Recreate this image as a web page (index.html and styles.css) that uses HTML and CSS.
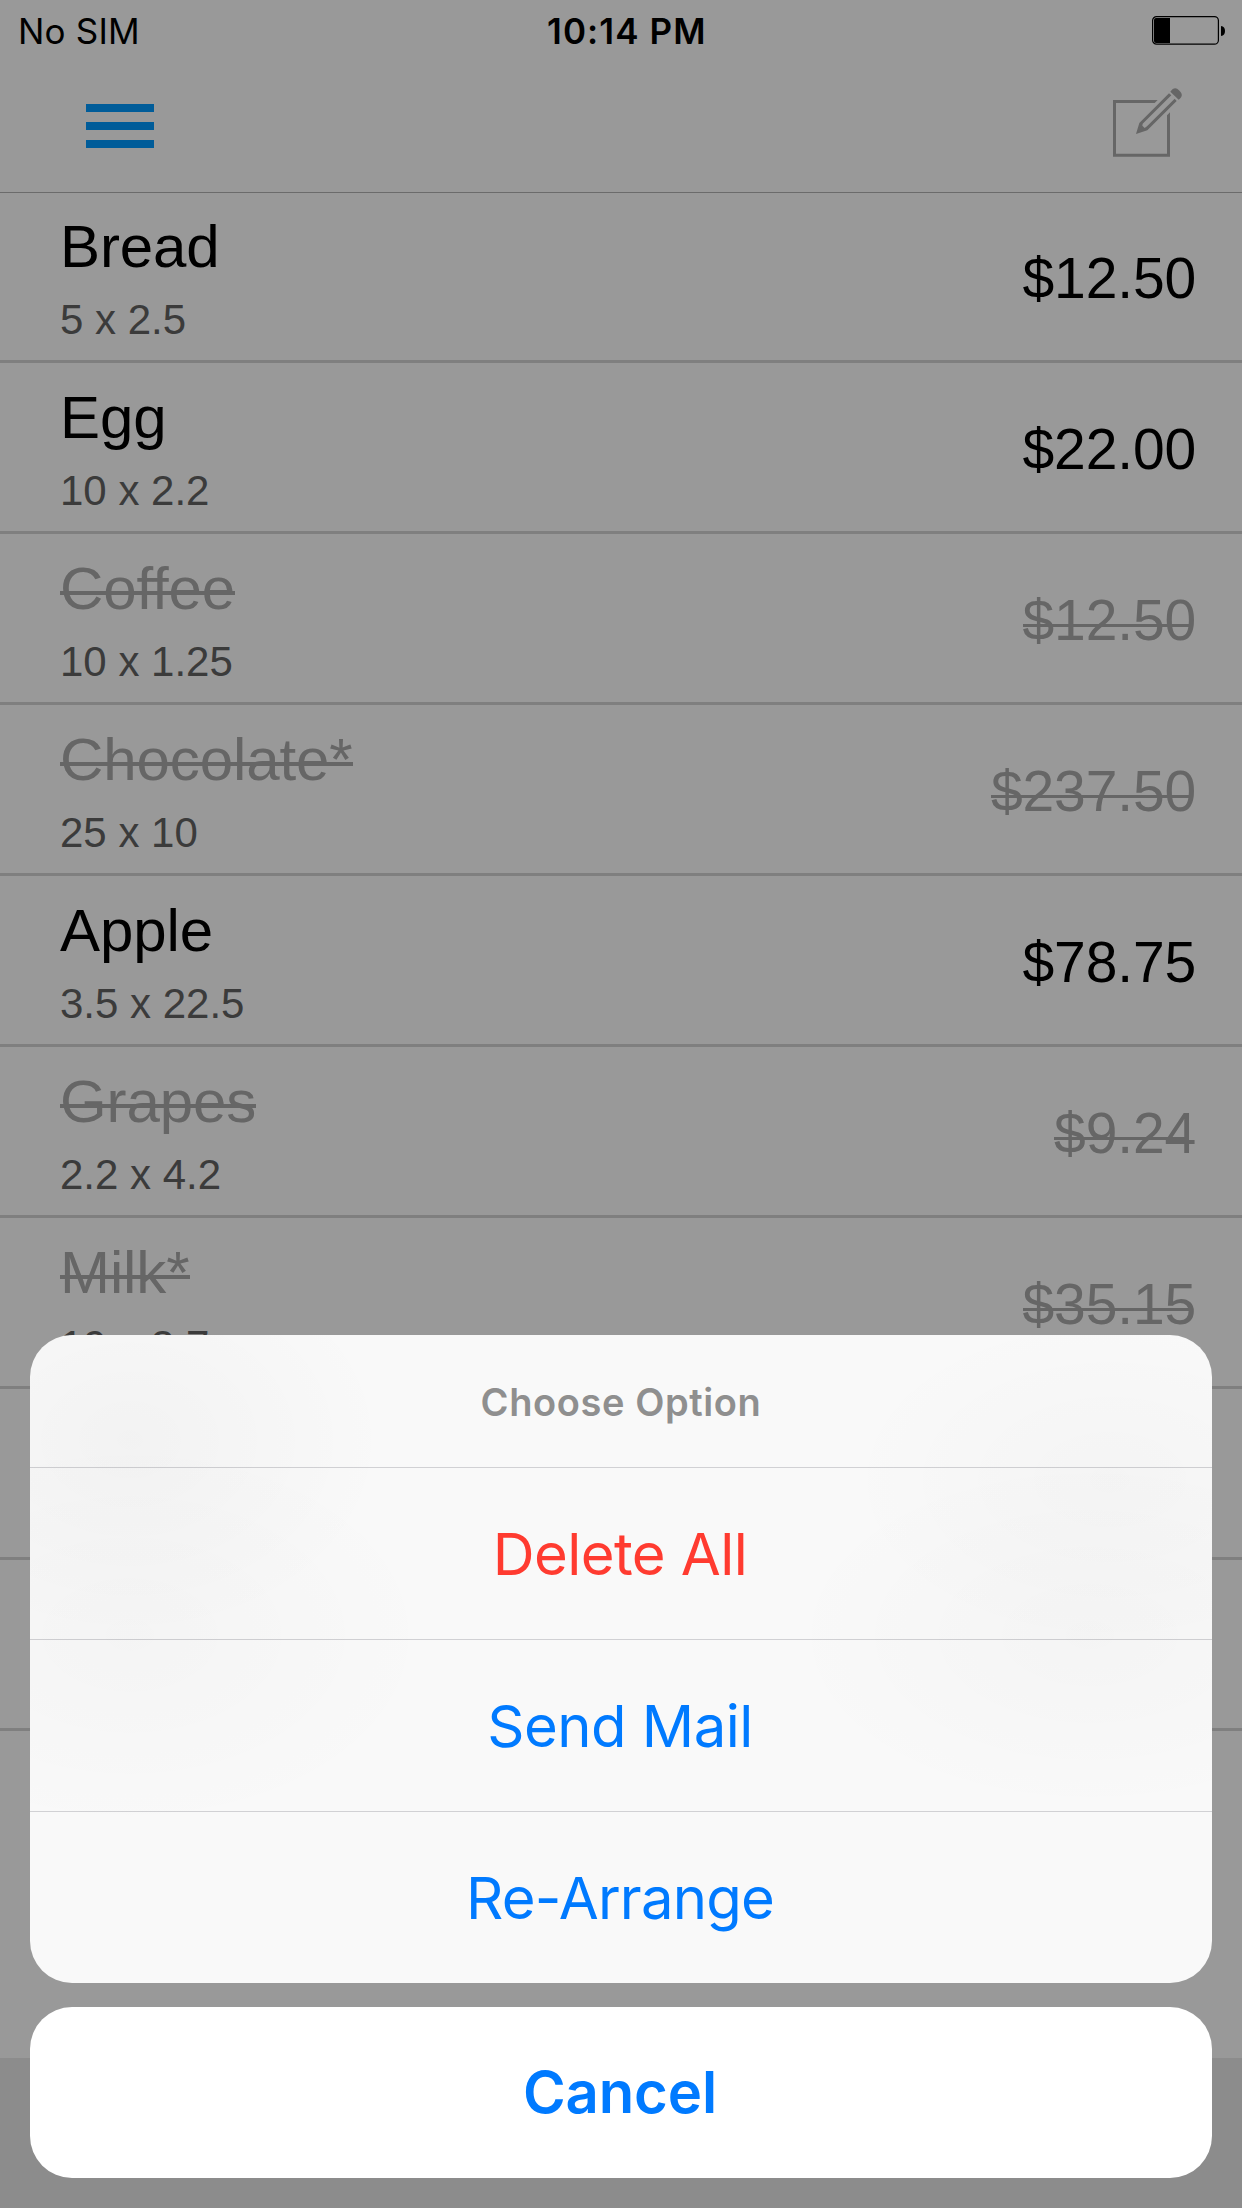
FILE: index.html
```html
<!DOCTYPE html>
<html lang="en">
<head>
    <meta charset="UTF-8">
    <meta name="viewport" content="width=device-width, initial-scale=1.0">
    <title>Shopping List</title>
    <link rel="stylesheet" href="styles.css">
</head>
<body>
    <div class="screen">
        <div class="status-bar">
            <span class="carrier">No SIM</span>
            <span class="clock">10:14 PM</span>
            <svg class="battery" width="73" height="29" viewBox="0 0 73 29">
                <rect x="0.6" y="0.6" width="65.8" height="27.6" rx="4" fill="none" stroke="#000" stroke-width="1.2"/>
                <path d="M18 2H4Q2 2 2 4V25Q2 27 4 27H18Z"/>
                <path d="M69 10Q73 10.500 73 15T69 20Z"/>
            </svg>
        </div>
        <div class="nav-bar">
            <button class="menu-button"><span></span><span></span><span></span></button>
            <svg class="edit-icon" width="71" height="71" viewBox="96 261 213 213" fill="#aaa">
                <path d="M99 300H233L224 309H108V461H261V346L270 337V470H99Z"/>
                <path fill-rule="evenodd" d="M267 280L178 369L168 402L202 391L290 303L284 296L201 379L194 384L187 377L188 371L274 286Z"/>
                <path d="M271 275C280 262 289 262 297 271L301 275C308 283 307 291 296 299Z"/>
            </svg>
        </div>

        <ul class="list">
            <li class="item">
                <div class="info"><p class="name">Bread</p><p class="qty">5 x 2.5</p></div>
                <span class="price">$12.50</span>
            </li>
            <li class="item">
                <div class="info"><p class="name">Egg</p><p class="qty">10 x 2.2</p></div>
                <span class="price">$22.00</span>
            </li>
            <li class="item done">
                <div class="info"><p class="name">Coffee</p><p class="qty">10 x 1.25</p></div>
                <span class="price">$12.50</span>
            </li>
            <li class="item done">
                <div class="info"><p class="name">Chocolate*</p><p class="qty">25 x 10</p></div>
                <span class="price">$237.50</span>
            </li>
            <li class="item">
                <div class="info"><p class="name">Apple</p><p class="qty">3.5 x 22.5</p></div>
                <span class="price">$78.75</span>
            </li>
            <li class="item done">
                <div class="info"><p class="name">Grapes</p><p class="qty">2.2 x 4.2</p></div>
                <span class="price">$9.24</span>
            </li>
            <li class="item done">
                <div class="info"><p class="name">Milk*</p><p class="qty">19 x 3.7</p></div>
                <span class="price">$35.15</span>
            </li>
            <li class="item"></li>
            <li class="item"></li>
        </ul>
        <div class="bottom-bar"></div>
    </div>

    <div class="overlay">
        <div class="sheet">
            <h2 class="sheet-title">Choose Option</h2>
            <button class="option delete">Delete All</button>
            <button class="option">Send Mail</button>
            <button class="option rearrange">Re-Arrange</button>
        </div>
        <button class="cancel">Cancel</button>
    </div>
</body>
</html>
```
FILE: styles.css
```css
* {
    box-sizing: border-box;
    margin: 0;
    padding: 0;
}

body {
    width: 1242px;
    height: 2208px;
    overflow: hidden;
    font-family: "Liberation Sans", Arial, sans-serif;
    background: #fff;
    color: #000;
}

button {
    border: none;
    background: none;
    font-family: Inter, sans-serif;
}

.screen {
    height: 2208px;
    display: flex;
    flex-direction: column;
}

/* status bar */
.status-bar {
    display: grid;
    grid-template-columns: 547px 1fr auto;
    height: 60px;
    padding: 10px 17px 0 0;
    font: 35px/42px Inter, sans-serif;
}

.carrier {
    padding-left: 18px;
    letter-spacing: 0.2px;
}

.clock {
    font-weight: 600;
    letter-spacing: 1.1px;
}

.battery {
    margin-top: 6px;
}

/* nav bar */
.nav-bar {
    display: flex;
    justify-content: space-between;
    align-items: flex-start;
    height: 132px;
    padding: 27px 59px 0 86px;
    box-shadow: 0 1px 0 #b2b2b2;
}

.menu-button {
    display: flex;
    flex-direction: column;
    gap: 10px;
    width: 68px;
    margin-top: 17px;
}

.menu-button span {
    height: 8px;
    background: #0099ff;
}

/* list */
.list {
    flex: 1;
    list-style: none;
}

.item {
    display: flex;
    justify-content: space-between;
    height: 171px;
    padding: 21px 46px 0 60px;
    border-bottom: 3px solid #d4d4d4;
}

.name {
    width: fit-content;
    font-size: 60px;
    line-height: 68px;
    letter-spacing: -0.1px;
}

.qty {
    margin-top: 15px;
    font-size: 42px;
    line-height: 48px;
    color: #636363;
}

.price {
    height: 64px;
    margin-top: 33px;
    font-size: 57px;
    line-height: 64px;
    letter-spacing: -0.15px;
}

.done .name, .done .price {
    position: relative;
    color: #aaa;
}

.done .name::after, .done .price::after {
    content: "";
    position: absolute;
    left: 0;
    right: 0;
    top: 36px;
    height: 4px;
    background: #aaa;
}

.done .price::after {
    right: 7px;
    height: 3px;
}

.bottom-bar {
    height: 150px;
    background: #e9e9e9;
}

/* action sheet */
.overlay {
    position: absolute;
    inset: 0;
    height: 2208px;
    display: flex;
    flex-direction: column;
    justify-content: flex-end;
    gap: 24px;
    padding: 30px;
    background: rgba(0, 0, 0, 0.4);
}

.sheet {
    display: flex;
    flex-direction: column;
    border-radius: 42px;
    overflow: hidden;
    background:
        radial-gradient(ellipse 260px 200px at 100px 105px, rgba(0, 0, 0, 0.028), transparent),
        radial-gradient(ellipse 310px 200px at 100px 300px, rgba(0, 0, 0, 0.018), transparent),
        radial-gradient(ellipse 270px 170px at 1080px 145px, rgba(0, 0, 0, 0.02), transparent),
        radial-gradient(ellipse 310px 180px at 1060px 300px, rgba(0, 0, 0, 0.018), transparent),
        #f9f9f9;
}

.sheet-title {
    height: 132px;
    padding-top: 1px;
    font: 600 38px/132px Inter, sans-serif;
    letter-spacing: 0.6px;
    text-align: center;
    color: #8f8f8f;
}

.option {
    height: 172px;
    padding: 2px 2px 0 0;
    border-top: 1px solid rgba(0, 0, 20, 0.16);
    font-size: 58px;
    line-height: 169px;
    letter-spacing: -0.52px;
    color: #007aff;
}

.option.delete {
    color: #ff3b30;
    letter-spacing: -0.57px;
}

.option.rearrange {
    letter-spacing: -0.78px;
}

.cancel {
    height: 171px;
    padding-right: 2px;
    border-radius: 42px;
    background: #fff;
    font-size: 58px;
    font-weight: 600;
    line-height: 171px;
    letter-spacing: -0.12px;
    color: #007aff;
}
```
